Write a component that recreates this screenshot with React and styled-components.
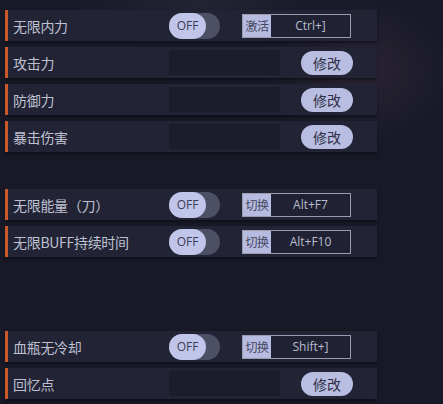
import React from 'react'
import styled, { createGlobalStyle } from 'styled-components'

const GlobalStyle = createGlobalStyle`
  html, body {
    margin: 0;
    padding: 0;
  }
  body {
    width: 443px;
    height: 404px;
    overflow: hidden;
    background:
      radial-gradient(ellipse 140px 110px at 360px 70px, rgba(60, 44, 62, 0.55), transparent 70%),
      radial-gradient(ellipse 180px 60px at 200px 0px, rgba(40, 40, 58, 0.7), transparent 80%),
      #171926;
    font-family: "Noto Sans CJK SC", "Noto Sans", sans-serif;
  }
`

const items = [
  { label: '无限内力', type: 'toggle', action: '激活', key: 'Ctrl+]' },
  { label: '攻击力', type: 'edit' },
  { label: '防御力', type: 'edit' },
  { label: '暴击伤害', type: 'edit' },
  { spacer: 25 },
  { label: '无限能量（刀）', type: 'toggle', action: '切换', key: 'Alt+F7' },
  { label: '无限BUFF持续时间', type: 'toggle', action: '切换', key: 'Alt+F10' },
  { spacer: 62 },
  { label: '血瓶无冷却', type: 'toggle', action: '切换', key: 'Shift+]' },
  { label: '回忆点', type: 'edit' },
]

const App = () => {
  return (
    <>
      <GlobalStyle />
      <Panel>
        {items.map((item, i) =>
          item.spacer ? (
            <Spacer key={i} $h={item.spacer} />
          ) : (
            <Row key={i}>
              <Label>{item.label}</Label>
              {item.type === 'toggle' ? (
                <>
                  <Toggle>
                    <Knob>OFF</Knob>
                  </Toggle>
                  <HotKey>
                    <HotKeyTag>{item.action}</HotKeyTag>
                    <HotKeyValue>{item.key}</HotKeyValue>
                  </HotKey>
                </>
              ) : (
                <>
                  <ValueBox />
                  <EditButton>修改</EditButton>
                </>
              )}
            </Row>
          )
        )}
      </Panel>
    </>
  )
}

const Panel = styled.div`
  display: flex;
  flex-direction: column;
  gap: 6px;
  width: 373px;
  padding: 10px 0 0 4px;
`

const Spacer = styled.div`
  height: ${(p) => p.$h}px;
`

const Row = styled.div`
  display: flex;
  align-items: center;
  height: 31px;
  background: #222436;
  border-left: 3px solid #c9582b;
  margin-left: 1px;
  box-shadow: 0 2px 2px rgba(8, 9, 16, 0.55);
`

const Label = styled.div`
  width: 161px;
  padding-left: 5px;
  box-sizing: border-box;
  color: #bfc1d1;
  font-size: 14px;
  white-space: nowrap;
  letter-spacing: -0.3px;
`

const Toggle = styled.div`
  width: 51px;
  height: 26px;
  border-radius: 13px;
  background: #4d5064;
  display: flex;
  align-items: center;
`

const Knob = styled.div`
  width: 37px;
  height: 26px;
  border-radius: 13px;
  background: #c2c5ea;
  color: #3b3e56;
  font-family: "Open Sans", "Noto Sans", sans-serif;
  font-size: 12px;
  display: flex;
  align-items: center;
  justify-content: center;
`

const HotKey = styled.div`
  display: flex;
  margin-left: 22px;
  width: 109px;
  height: 24px;
  box-sizing: border-box;
  border: 1px solid #9a9cb0;
`

const HotKeyTag = styled.div`
  width: 28px;
  background: #b7bbe0;
  color: #444760;
  font-size: 12px;
  display: flex;
  align-items: center;
  justify-content: center;
  letter-spacing: -0.5px;
`

const HotKeyValue = styled.div`
  flex: 1;
  background: #202233;
  color: #b9bccd;
  font-family: "Open Sans", "Noto Sans", sans-serif;
  font-size: 12px;
  display: flex;
  align-items: center;
  justify-content: center;
`

const ValueBox = styled.div`
  width: 111px;
  height: 25px;
  background: #1b1d2b;
`

const EditButton = styled.button`
  margin-left: 21px;
  width: 52px;
  height: 24px;
  border: none;
  border-radius: 12px;
  background: #b9bde2;
  color: #2e3045;
  font-family: "Noto Sans CJK SC", sans-serif;
  font-size: 14px;
  padding: 0;
  display: flex;
  align-items: center;
  justify-content: center;
`

export default App
